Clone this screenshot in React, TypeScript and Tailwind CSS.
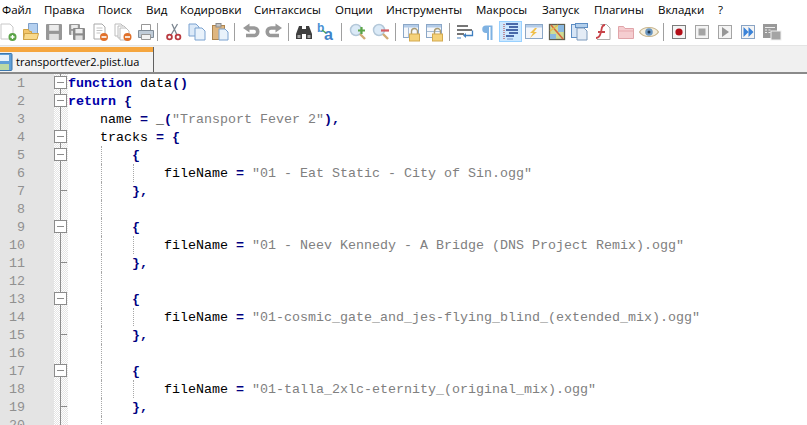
import type { ReactNode } from "react";

const menus = [
  { label: "Файл", width: "w-[42px]" },
  { label: "Правка", width: "w-[54px]" },
  { label: "Поиск", width: "w-[48px]" },
  { label: "Вид", width: "w-[34px]" },
  { label: "Кодировки", width: "w-[74px]" },
  { label: "Синтаксисы", width: "w-[81px]" },
  { label: "Опции", width: "w-[51px]" },
  { label: "Инструменты", width: "w-[90px]" },
  { label: "Макросы", width: "w-[66px]" },
  { label: "Запуск", width: "w-[52px]" },
  { label: "Плагины", width: "w-[64px]" },
  { label: "Вкладки", width: "w-[60px]" },
  { label: "?", width: "w-[10px]" },
];

const Svg = ({ children }: { children: ReactNode }) => (
  <svg width="20" height="20" viewBox="0 0 20 20">{children}</svg>
);

const Page = ({ x = 4, y = 2, w = 10, h = 14, stroke = "#a8a8a8", fill = "#fff" }) => (
  <path d={`M${x} ${y}h${w - 3}l3 3v${h - 3}h-${w}z`} fill={fill} stroke={stroke} />
);

const Minus = ({ cx = 14, cy = 15 }) => (
  <g>
    <circle cx={cx} cy={cy} r="4" fill="#e0702a" />
    <path d={`M${cx - 2.5} ${cy}h5`} stroke="#fff" strokeWidth="1.6" />
  </g>
);

const Floppy = ({ x = 2, y = 2, s = 16, c = "#979797" }) => (
  <g>
    <rect x={x} y={y} width={s} height={s} rx="1" fill={c} />
    <rect x={x + s * 0.2} y={y + 1} width={s * 0.6} height={s * 0.36} fill="#ececec" />
    <rect x={x + s * 0.2} y={y + s * 0.62} width={s * 0.6} height={s * 0.38} fill="#e0e0e0" />
  </g>
);

const Lock = () => (
  <g>
    <path d="M9.5 12V9.5a3 3 0 0 1 6 0V12" fill="none" stroke="#a89a72" strokeWidth="1.4" />
    <rect x="7.5" y="12" width="10" height="7" fill="#f5d27a" stroke="#d3aa50" />
  </g>
);

const Window = () => (
  <g>
    <rect x="1.5" y="2.5" width="15" height="13" fill="#f6f8fb" stroke="#8ba7c7" />
    <rect x="2" y="3" width="14" height="2.5" fill="#b4cce8" />
    <path d="M6.5 5.5v10" stroke="#a9bdd4" />
  </g>
);

const MediaBox = ({ children, stroke = "#a4a4a4" }: { children: ReactNode; stroke?: string }) => (
  <Svg>
    <rect x="2.5" y="3.5" width="13" height="13" fill="#f4f4f4" stroke={stroke} />
    {children}
  </Svg>
);

const Magnifier = ({ children }: { children: ReactNode }) => (
  <Svg>
    <circle cx="8" cy="8" r="5.5" fill="#dbeaf7" stroke="#b4c8d9" strokeWidth="1.5" />
    <path d="M12 12l5 5" stroke="#d0ab74" strokeWidth="2.4" />
    {children}
  </Svg>
);

const icons: Record<string, ReactNode> = {
  new: (
    <Svg>
      <Page x={3} y={2} w={12} h={15} stroke="#c8c8c8" />
      <circle cx="14.5" cy="15" r="4" fill="#5aa347" />
      <path d="M12.5 15h4M14.5 13v4" stroke="#fff" strokeWidth="1.3" />
    </Svg>
  ),
  open: (
    <Svg>
      <path d="M7.5 1.5h9v10h-9z" fill="#b4d0f0" stroke="#7c9fca" />
      <path d="M2.5 7.5h5l1 2h2v8h-8z" fill="#f3c56a" stroke="#cfa347" />
      <path d="M2.5 17.5l1-6h14l-1.500 6z" fill="#f8d98c" stroke="#cfa347" />
    </Svg>
  ),
  save: <Svg><Floppy /></Svg>,
  saveAll: (
    <Svg>
      <Floppy x={2} y={2} s={11} c="#979797" />
      <Floppy x={6} y={6} s={12} c="#8a8a8a" />
    </Svg>
  ),
  close: (
    <Svg>
      <Page x={4} y={2} w={11} h={15} />
      <path d="M6.5 6h6M6.5 8.5h6M6.5 11h4" stroke="#c4c4c4" />
      <Minus cx={14} cy={15} />
    </Svg>
  ),
  closeAll: (
    <Svg>
      <Page x={2} y={2} w={9} h={12} stroke="#bcbcbc" />
      <Page x={5} y={4} w={9} h={12} stroke="#bcbcbc" />
      <Page x={7} y={6} w={9} h={12} stroke="#bcbcbc" />
      <Minus cx={14.5} cy={15} />
    </Svg>
  ),
  print: (
    <Svg>
      <path d="M5.5 2.5h9v6h-9z" fill="#fff" stroke="#979797" />
      <path d="M2.5 8.5h15v7h-15z" fill="#c0ccd8" stroke="#808c98" />
      <path d="M5.5 12.5h9v5h-9z" fill="#f2f2f2" stroke="#979797" />
    </Svg>
  ),
  cut: (
    <Svg>
      <path d="M13.5 2L7 13M8 2l5 11" stroke="#7c8690" strokeWidth="1.3" fill="none" />
      <circle cx="5.5" cy="15" r="2.4" fill="none" stroke="#b93a40" strokeWidth="1.8" />
      <circle cx="14" cy="15" r="2.4" fill="none" stroke="#b93a40" strokeWidth="1.8" />
    </Svg>
  ),
  copy: (
    <Svg>
      <Page x={2} y={2} w={10} h={12} stroke="#7aa2d0" fill="#dbe9f8" />
      <Page x={8} y={6} w={10} h={12} stroke="#7aa2d0" fill="#e9f2fb" />
    </Svg>
  ),
  paste: (
    <Svg>
      <rect x="2.5" y="3.5" width="12" height="14" fill="#dfb680" stroke="#ad8550" />
      <rect x="6" y="1.5" width="5" height="3.5" fill="#c4c4c4" stroke="#8c8c8c" />
      <Page x={9} y={7} w={9} h={11} stroke="#7aa2d0" fill="#e9f2fb" />
    </Svg>
  ),
  undo: (
    <Svg>
      <path d="M7 6h6a3.500 3.500 0 0 1 0 7.500H5" fill="none" stroke="#999999" strokeWidth="3.600" />
      <path d="M8.500 1.500v9L2 6z" fill="#999999" />
    </Svg>
  ),
  redo: (
    <Svg>
      <path d="M13 6H7a3.500 3.500 0 0 0 0 7.500h8" fill="none" stroke="#999999" strokeWidth="3.600" />
      <path d="M11.500 1.500v9L18 6z" fill="#999999" />
    </Svg>
  ),
  find: (
    <Svg>
      <path d="M5 4h3v3h4V4h3l3 8v5h-6v-5H8v5H2v-5z" fill="#3e3e3e" />
      <path d="M3.500 13h3v3h-3zM13.500 13h3v3h-3z" fill="#a4a4a4" />
    </Svg>
  ),
  replace: (
    <Svg>
      <text x="0" y="10" fontSize="12" fontWeight="700" fill="#4a90d4" fontFamily="Liberation Sans, sans-serif">b</text>
      <text x="7" y="18" fontSize="16" fontWeight="700" fill="#3f83c8" fontFamily="Liberation Sans, sans-serif">a</text>
      <path d="M5 8l4 3" stroke="#4aa05a" strokeWidth="1.500" />
    </Svg>
  ),
  zoomIn: (
    <Magnifier>
      <path d="M10 8.500h7M13.500 5v7" stroke="#5aa547" strokeWidth="2.200" />
    </Magnifier>
  ),
  zoomOut: (
    <Magnifier>
      <path d="M10 8.500h8" stroke="#d45c62" strokeWidth="2.200" />
    </Magnifier>
  ),
  lockA: <Svg><Window /><Lock /></Svg>,
  lockB: (
    <Svg>
      <rect x="1.500" y="2.500" width="15" height="13" fill="#f6f8fb" stroke="#8ba7c7" />
      <rect x="2" y="3" width="14" height="2.500" fill="#b4cce8" />
      <path d="M2 9.500h14" stroke="#a9bdd4" />
      <Lock />
    </Svg>
  ),
  wrap: (
    <Svg>
      <path d="M2 4h11M2 8h15M2 12h7" stroke="#4a4a4a" strokeWidth="1.300" />
      <path d="M17.500 8.500v5h-7" fill="none" stroke="#3f7fc0" strokeWidth="1.300" />
      <path d="M11 11v5l-3-2.500z" fill="#3f7fc0" />
      <path d="M2 16h4" stroke="#6f9ccb" strokeWidth="1.300" />
    </Svg>
  ),
  pilcrow: (
    <Svg>
      <path d="M8 3.500a3.500 3.500 0 0 0 0 7.500h1V18h2V5h1.500v13h2V3.500z" fill="#7fb2e2" />
    </Svg>
  ),
  indent: (
    <Svg>
      <path d="M5 2h12M8 5h9M5 8h12M8 11h9M5 14h8" stroke="#1e3f8f" strokeWidth="1.500" />
      <path d="M3 2v16" stroke="#b03030" strokeDasharray="1 1" />
      <path d="M6.500 17h5" stroke="#1e3f8f" strokeDasharray="1 1" />
    </Svg>
  ),
  lang: (
    <Svg>
      <rect x="1.500" y="2.500" width="17" height="14" fill="#f4f6fa" stroke="#8ba7c7" />
      <rect x="2" y="3" width="16" height="2.500" fill="#b4cce8" />
      <path d="M11 6L6 11h3l-3 5 7-6h-3l3-4z" fill="#f0c04c" />
    </Svg>
  ),
  map: (
    <Svg>
      <rect x="2.500" y="2.500" width="15" height="15" fill="#cfdc94" stroke="#5f5f50" strokeWidth="1.300" />
      <path d="M11 3h6v7h-6zM3 12h6v5H3z" fill="#8ab8e0" />
      <path d="M4 3l12 14" stroke="#d5653f" strokeWidth="1.600" />
      <path d="M3 9l8-6" stroke="#eab84a" strokeWidth="1.300" />
    </Svg>
  ),
  docs: (
    <Svg>
      <rect x="1.500" y="2.500" width="11" height="13" fill="#d6e5f6" stroke="#5e8ec4" />
      <rect x="5.500" y="1.500" width="12" height="4" fill="#b2cfec" stroke="#5e8ec4" />
      <Page x={7} y={6} w={10} h={12} stroke="#7c9abc" fill="#e4ecf6" />
    </Svg>
  ),
  fn: (
    <Svg>
      <path d="M7.500 2.500h6l3.500 3.500v11.500H4" fill="#fff" stroke="#adadad" />
      <path d="M12 3C8 3 9 7 8 10s-1 6-5 6M5 10h7" fill="none" stroke="#c8444a" strokeWidth="1.800" />
    </Svg>
  ),
  folder: (
    <Svg>
      <path d="M2.500 4.500h5l1.500 2h8.500v10h-15z" fill="#f5cdd0" stroke="#e0a4a9" />
      <path d="M3 9h14" stroke="#e7a9ae" />
    </Svg>
  ),
  eye: (
    <Svg>
      <path d="M0.500 10C4 4 16 4 19.500 10 16 16 4 16 0.500 10z" fill="#f4eedd" stroke="#c7b48b" strokeWidth="1.200" />
      <circle cx="10" cy="10" r="3.800" fill="#6a96c0" />
      <circle cx="10" cy="10" r="1.500" fill="#23384f" />
    </Svg>
  ),
  rec: (
    <MediaBox stroke="#7c7c7c">
      <circle cx="9" cy="10" r="3.600" fill="#b30d17" />
    </MediaBox>
  ),
  stop: (
    <MediaBox>
      <rect x="5.500" y="6.500" width="7" height="7" fill="#a4a4a4" />
    </MediaBox>
  ),
  play: (
    <MediaBox>
      <path d="M6 5l7 5-7 5z" fill="#969696" />
    </MediaBox>
  ),
  ff: (
    <MediaBox stroke="#8aa4c4">
      <path d="M4.500 5l5 5-5 5zM9.500 5l5 5-5 5z" fill="#3a82d8" />
    </MediaBox>
  ),
  list: (
    <Svg>
      <rect x="1" y="2" width="14" height="14" fill="#999999" />
      <path d="M3 5.500h10M3 8h2M6.500 8h2M3 10.500h2M6.500 10.500h2" stroke="#ececec" />
      <rect x="9" y="9" width="10" height="9" fill="#a4a4a4" stroke="#f0f0f0" />
    </Svg>
  ),
};

const groups = [
  { names: ["new", "open", "save", "saveAll", "close", "closeAll", "print"], gap: "ml-0 mr-[4px]" },
  { names: ["cut", "copy", "paste"], gap: "ml-[3px] mr-[4px]" },
  { names: ["undo", "redo"], gap: "ml-[3px] mr-[3px]" },
  { names: ["find", "replace"], gap: "ml-[3px] mr-[4px]" },
  { names: ["zoomIn", "zoomOut"], gap: "ml-[3px] mr-[4px]" },
  { names: ["lockA", "lockB"], gap: "ml-[3px] mr-[3px]" },
  { names: ["wrap", "pilcrow", "indent", "lang", "map", "docs", "fn", "folder", "eye"], gap: "ml-[3px] mr-[4px]" },
  { names: ["rec", "stop", "play", "ff", "list"], gap: "" },
];

const Toolbar = () => (
  <div className="flex h-[25px] items-start bg-white pt-px -ml-[4px]">
    {groups.map((group, i) => (
      <div key={i} className="flex h-[21px] items-center">
        {group.names.map((name) => (
          <div
            key={name}
            className={
              name === "indent"
                ? "flex h-[21px] w-[23px] items-center justify-center border border-[#99d1ff] bg-[#cce8ff]"
                : "flex h-[21px] w-[23px] items-center justify-center"
            }
          >
            {icons[name]}
          </div>
        ))}
        {group.gap && <div className={`${group.gap} h-[18px] w-px bg-[#a0a0a0]`} />}
      </div>
    ))}
  </div>
);

type Token = { text: string; kind?: "kw" | "op" | "str" };

const file = (name: string): Token[] => [
  { text: "fileName " },
  { text: "= ", kind: "op" },
  { text: `"${name}"`, kind: "str" },
];
const open: Token[] = [{ text: "{", kind: "op" }];
const close: Token[] = [{ text: "},", kind: "op" }];

type Row = { fold: "box" | "line" | "tail"; indent: number; guides: number; tokens: Token[] };

const rows: Row[] = [
  { fold: "box", indent: 0, guides: 0, tokens: [{ text: "function", kind: "kw" }, { text: " data" }, { text: "()", kind: "op" }] },
  { fold: "box", indent: 0, guides: 0, tokens: [{ text: "return", kind: "kw" }, { text: " " }, { text: "{", kind: "op" }] },
  { fold: "line", indent: 1, guides: 0, tokens: [{ text: "name " }, { text: "= ", kind: "op" }, { text: "_" }, { text: "(", kind: "op" }, { text: '"Transport Fever 2"', kind: "str" }, { text: "),", kind: "op" }] },
  { fold: "box", indent: 1, guides: 0, tokens: [{ text: "tracks " }, { text: "= {", kind: "op" }] },
  { fold: "box", indent: 2, guides: 1, tokens: open },
  { fold: "line", indent: 3, guides: 2, tokens: file("01 - Eat Static - City of Sin.ogg") },
  { fold: "tail", indent: 2, guides: 1, tokens: close },
  { fold: "line", indent: 2, guides: 1, tokens: [] },
  { fold: "box", indent: 2, guides: 1, tokens: open },
  { fold: "line", indent: 3, guides: 2, tokens: file("01 - Neev Kennedy - A Bridge (DNS Project Remix).ogg") },
  { fold: "tail", indent: 2, guides: 1, tokens: close },
  { fold: "line", indent: 2, guides: 1, tokens: [] },
  { fold: "box", indent: 2, guides: 1, tokens: open },
  { fold: "line", indent: 3, guides: 2, tokens: file("01-cosmic_gate_and_jes-flying_blind_(extended_mix).ogg") },
  { fold: "tail", indent: 2, guides: 1, tokens: close },
  { fold: "line", indent: 2, guides: 1, tokens: [] },
  { fold: "box", indent: 2, guides: 1, tokens: open },
  { fold: "line", indent: 3, guides: 2, tokens: file("01-talla_2xlc-eternity_(original_mix).ogg") },
  { fold: "tail", indent: 2, guides: 1, tokens: close },
  { fold: "line", indent: 2, guides: 1, tokens: [] },
];

const tokenClass = {
  kw: "font-bold text-[#0000a8]",
  op: "font-bold text-[#000080]",
  str: "text-[#808080]",
};

// fold margin: box, straight line, or line with a tick at the end of a block
const Fold = ({ kind }: { kind: Row["fold"] }) => (
  <svg width="14" height="18" viewBox="0 0 14 18">
    <path d="M6.500 0v18" stroke="#8c8c8c" />
    {kind === "tail" && <path d="M6.500 8.500H13" stroke="#8c8c8c" />}
    {kind === "box" && (
      <g>
        <rect x="0.500" y="2.500" width="12" height="12" fill="#fff" stroke="#8c8c8c" />
        <path d="M3 8.500h7" stroke="#8c8c8c" />
      </g>
    )}
  </svg>
);

const Editor = () => (
  <div className="font-['Liberation_Mono',monospace] text-[13.33px] text-black">
    {rows.map((row, i) => (
      <div key={i} className="flex h-[18px] leading-[20px]">
        <div className="w-[54px] shrink-0 bg-[#e4e4e4] pr-[29px] text-right text-[#909090]">{i + 1}</div>
        <div className="h-[18px] w-[14px] shrink-0 bg-[repeating-conic-gradient(#e4e4e4_0%_25%,#ffffff_0%_50%)] bg-[length:2px_2px]">
          <Fold kind={row.fold} />
        </div>
        <div className="flex">
          {Array.from({ length: row.indent }).map((_, level) => (
            <div
              key={level}
              className={
                level > 0 && level <= row.guides
                  ? "ml-px w-[31px] border-l border-dotted border-[#a8a8a8]"
                  : "w-[32px]"
              }
            />
          ))}
          <div className="whitespace-pre">
            {row.tokens.map((token, t) => (
              <span key={t} className={token.kind ? tokenClass[token.kind] : ""}>
                {token.text}
              </span>
            ))}
          </div>
        </div>
      </div>
    ))}
  </div>
);

export default function App() {
  return (
    <div className="h-[425px] w-[807px] overflow-hidden bg-white font-['Open_Sans',sans-serif]">
      {/* Menu bar */}
      <div className="flex h-5 items-center bg-white pl-[2px] text-[11.5px] text-black">
        {menus.map((menu) => (
          <div key={menu.label} className={`${menu.width} shrink-0 whitespace-nowrap`}>
            {menu.label}
          </div>
        ))}
      </div>
      <Toolbar />
      {/* Tab bar */}
      <div className="flex h-[27px] border-t border-[#e4e4e4] bg-[#f0f0f0]">
        <div className="mt-px w-[154px] border-r border-[#606060] bg-[#f3f3f3]">
          <div className="h-[5px] bg-[#f5a63f]" />
          <div className="flex h-5 items-center">
            <svg width="13" height="18" viewBox="0 0 13 18" className="shrink-0">
              <rect x="-6" y="0.500" width="18" height="17" rx="1" fill="#5f9fd8" stroke="#3d77ad" />
              <rect x="-3" y="2" width="12" height="6" fill="#e8f2fb" />
              <rect x="-3" y="11" width="12" height="6" fill="#bcd9a4" />
            </svg>
            <span className="ml-[3px] whitespace-nowrap text-[11px] text-black">transportfever2.plist.lua</span>
          </div>
        </div>
      </div>
      <div className="h-[2px] bg-[#8a8a8a]" />
      <Editor />
    </div>
  );
}
